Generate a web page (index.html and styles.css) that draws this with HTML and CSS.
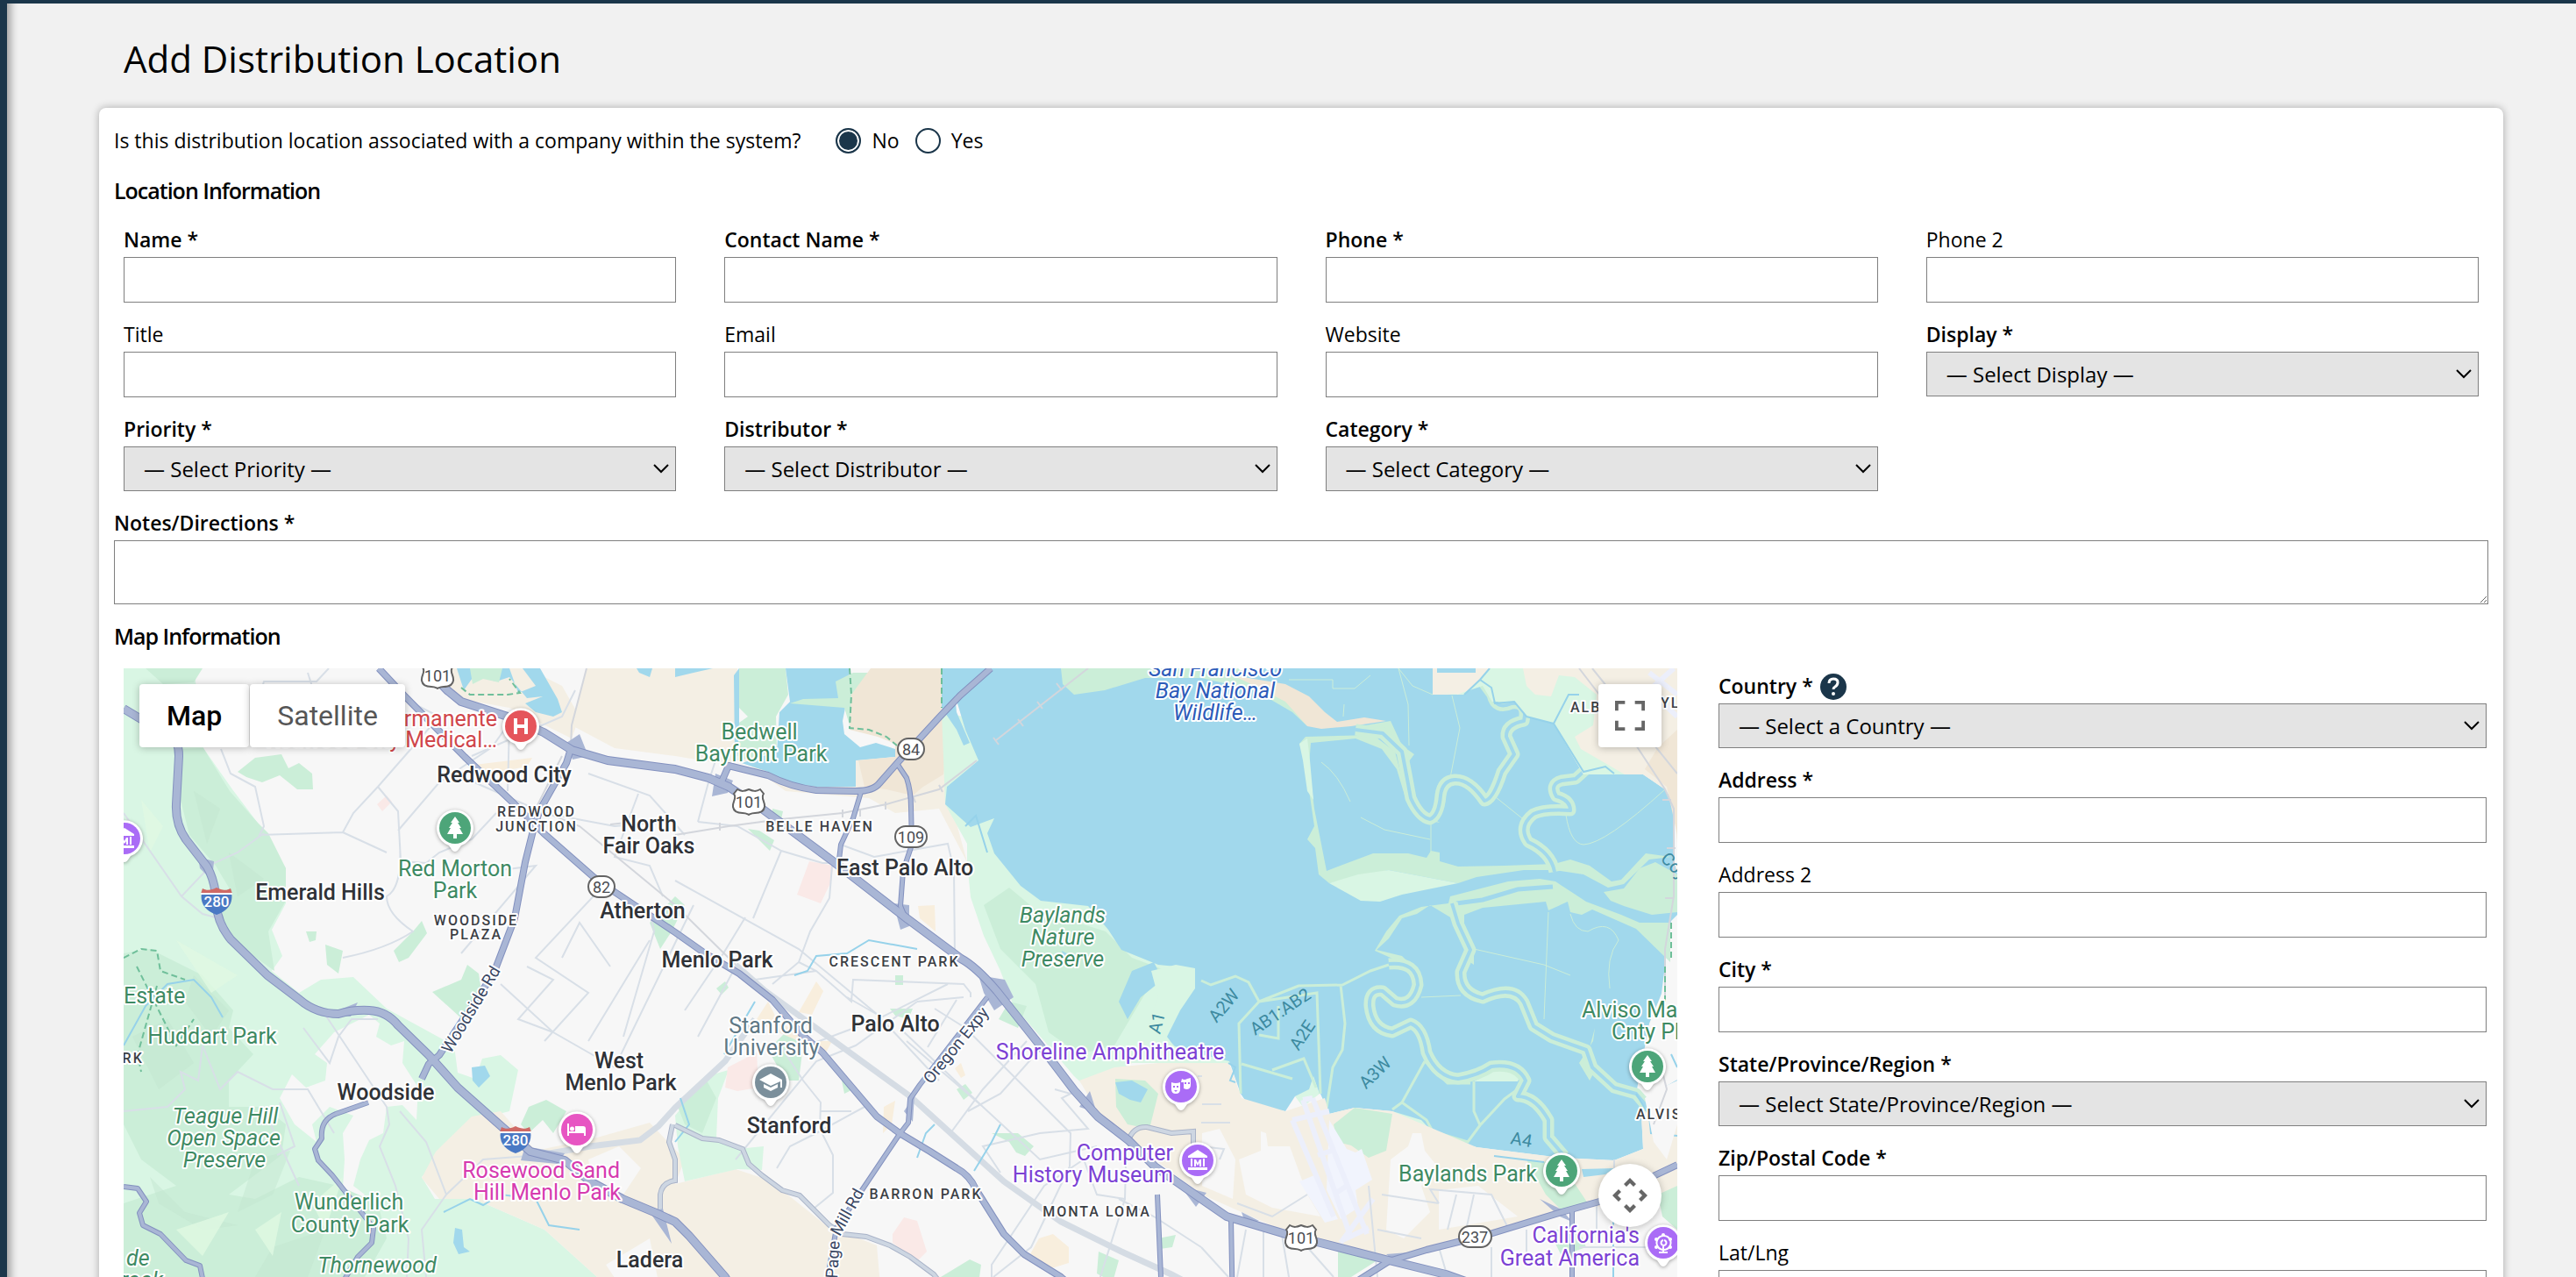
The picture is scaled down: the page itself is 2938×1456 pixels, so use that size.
FILE: index.html
```html
<!DOCTYPE html>
<html lang="en">
<head>
  <meta charset="UTF-8"/>
  <meta name="viewport" content="width=device-width, initial-scale=1.0"/>
  <title>Add Distribution Location</title>
  <link rel="stylesheet" href="styles.css">
</head>
<body>
  <main class="page">
    <h1>Add Distribution Location</h1>

    <form class="card">
      <div class="question" role="radiogroup" aria-labelledby="associated-label">
        <span id="associated-label">Is this distribution location associated with a company within the system?</span>
        <label><input type="radio" name="associated" value="no" checked>No</label>
        <label><input type="radio" name="associated" value="yes">Yes</label>
      </div>

      <h2>Location Information</h2>
      <div class="grid">
        <div class="field required"><label for="name">Name *</label><input type="text" id="name"></div>
        <div class="field required"><label for="contact">Contact Name *</label><input type="text" id="contact"></div>
        <div class="field required"><label for="phone">Phone *</label><input type="text" id="phone"></div>
        <div class="field"><label for="phone2">Phone 2</label><input type="text" id="phone2"></div>
        <div class="field"><label for="title">Title</label><input type="text" id="title"></div>
        <div class="field"><label for="email">Email</label><input type="text" id="email"></div>
        <div class="field"><label for="website">Website</label><input type="text" id="website"></div>
        <div class="field required"><label for="display">Display *</label><select id="display"><option>— Select Display —</option></select></div>
        <div class="field required"><label for="priority">Priority *</label><select id="priority"><option>— Select Priority —</option></select></div>
        <div class="field required"><label for="distributor">Distributor *</label><select id="distributor"><option>— Select Distributor —</option></select></div>
        <div class="field required"><label for="category">Category *</label><select id="category"><option>— Select Category —</option></select></div>
      </div>

      <div class="field required notes"><label for="notes">Notes/Directions *</label><textarea id="notes"></textarea></div>

      <h2>Map Information</h2>
      <div class="map-row">
        <div class="map">
          <svg class="map-canvas" viewBox="0 0 1772 738" preserveAspectRatio="xMinYMin slice">
            <defs>
              <g id="pin">
                <path d="M0 27C-3 27-4 24-7 20A21 21 0 1 1 7 20C4 24 3 27 0 27z"/>
              </g>
              <g id="tree"><path d="M0-13l5 7h-2l4 6h-2l4 7h-7v5h-4v-5h-7l4-7h-2l4-6h-2z"/></g>
              <g id="museum"><path d="M-11-5L0-12l11 7v2h-22zM-8-2h2v9h-2zM6-2h2v9H6zM-11 8h22v3h-22zM-4 7v-8h2l2 4 2-4h2v8H2V3L0 6l-2-3v4z"/></g>
              <g id="interstate">
                <path class="shield-blue" d="M-17-9C-19 2-14 11 0 16C14 11 19 2 17-9z"/>
                <path class="shield-red" d="M-16-14C-11-11-6-12 0-15C6-12 11-11 16-14L18-8H-18z"/>
                <path class="shield-rule" d="M-18-8H18"/>
                <text y="7">280</text>
              </g>
              <g id="us101">
                <path class="sign" d="M-13-14C-8-11-5-12 0-14C5-12 8-11 13-14L17-9C13-4 19 0 18 6C17 12 12 13 7 13C3 13 2 14 0 15C-2 14-3 13-7 13C-12 13-17 12-18 6C-19 0-13-4-17-9z"/>
                <text class="sign-text" y="7">101</text>
              </g>

              <g id="highways">
                <path d="M0 46L20 58L50 70Q63 80 63 100L60 155Q59 178 71 195L95 226Q105 243 106 270Q107 290 122 309L164 350L201 378Q220 394 245 394Q262 389 280 390Q300 391 313 407L348 441L381 478L434 525L464 551L503 561L532 585L569 605L605 620L629 631L645 647L686 694L710 738"/>
                <path d="M345 0L369 25L385 38L438 55L479 73L511 93L552 105L629 115L667 125L690 135L728 160L809 220L893 285L955 331Q972 340 996 368L1046 431L1084 481L1111 511L1146 538L1176 568L1229 605L1258 625L1325 645L1365 655L1443 675L1508 691L1640 738"/>
              </g>
              <g id="expressways">
                <path d="M291 0L320 31L389 101L446 155L479 188L536 238L560 255L629 301L663 325L702 348L740 378L774 418L797 438L859 511L885 530L920 551L950 570Q965 578 972 594L1004 645L1027 668L1069 694L1120 738"/>
                <path d="M989 0L954 31L931 55L885 105L862 131Q855 140 835 140L790 139Q760 135 735 122L690 111L680 134"/>
                <path d="M509 95L505 108L475 161L467 185L458 221L446 285L422 348L360 441L348 451L340 468"/>
                <path d="M1772 566L1683 608L1640 620L1558 645L1486 663L1443 676L1405 700"/>
              </g>
              <g id="arterials">
                <path d="M883 110L893 125Q898 140 898 158L899 201L889 231L886 271L893 288"/>
                <path d="M841 141L832 171L818 201L816 218"/>
                <path d="M985 375L908 475L897 491L895 518L885 531L838 601L813 638L803 694V738"/>
                <path d="M279 495L242 508Q224 515 226 536L218 548L222 561L238 578L275 625L285 638L283 655L267 671L250 700"/>
                <path d="M0 591L16 593L26 608L18 621L22 635L42 645L71 675L87 681L93 710"/>
                <path d="M1263 628L1265 738M1652 618V738M1179 600L1183 694"/>
              </g>
              <g id="connectors">
                <path d="M629 521L660 536L679 538L706 548L713 565L728 578L751 595L771 601L805 635L820 645L847 648L874 658L897 671L924 691L960 738"/>
                <path d="M1146 538Q1152 522 1167 523L1195 530L1220 528V550"/>
                <path d="M612 630L612 600Q614 586 629 584V560L622 540L626 520"/>
              </g>
              <g id="sloughs">
                <path d="M1405 70L1436 74L1458 95L1463 121L1468 148Q1478 170 1490 172Q1500 168 1502 145Q1504 128 1518 127Q1535 126 1552 151Q1562 150 1572 118L1586 98L1577 78Q1576 64 1597 60Q1602 38 1583 40Q1565 48 1561 30L1550 15"/>
                <path d="M1632 232Q1628 210 1602 198Q1590 180 1608 166Q1620 160 1650 162Q1650 150 1634 146Q1626 132 1640 128L1656 126L1667 116"/>
                <path d="M1515 268L1522 291L1536 321L1525 346Q1524 370 1550 376Q1585 360 1597 381L1608 408L1629 421L1668 435L1675 455L1700 478L1725 485L1742 505"/>
                <path d="M1443 337Q1475 334 1476 361Q1470 386 1450 380L1436 368Q1420 366 1421 385Q1424 412 1447 415L1468 405Q1482 410 1486 438Q1498 466 1522 468Q1545 464 1560 454Q1590 450 1599 470L1590 488Q1610 488 1625 515V535L1643 556"/>
              </g>
              <path id="page-mill" d="M814 696L817 648L852 585"/>
            </defs>

            <!-- land -->
            <rect class="land" width="1772" height="738"/>
            <path class="park" d="M0 0H80L88 60L91 91L124 138L152 175L185 228V268L169 298L181 328L169 345L200 370L225 355L262 352L300 388L377 430L381 461L401 468L409 445L430 441L450 458L440 505L400 515L340 580L355 605L400 605L480 640L540 694L550 738H0z"/>
            <path class="land" d="M240 415L280 395L292 405L288 420L305 430L320 425L318 450L336 478L334 515L318 498L300 500L296 530L280 538L270 560L262 590L275 600L268 605L250 592L252 560L250 530L262 510L235 500L215 520L220 540L195 520L178 490L192 463L208 478L230 470L232 450L218 440z"/>
            <path class="park-mid" d="M63 92L91 91L121 140L152 175L165 188L185 228L185 265L165 300L172 345L130 315L110 290L120 250L105 225L75 190L65 150zM25 0H90L80 16L45 18zM0 325L30 320L90 350L125 390L120 410L148 440L120 470L120 500L160 500L185 520L180 555L120 600L60 590L20 560L0 520zM0 610L60 590L150 605L200 580L245 590L290 610L300 650L250 738H0z"/>
            <path class="park-mid" d="M130 118L150 102L180 98L188 114L200 108L215 120L216 138L198 138L178 122L158 130L140 124zM308 322L330 300L340 288L346 302L325 330L314 335zM352 369L385 355L392 338L405 348L408 368L384 398zM208 300L220 300L219 310L212 312zM230 315L250 322L245 348L232 338zM453 520L462 500L482 492L505 505L490 530L478 515L462 530zM600 290L612 278L629 260L640 270L625 300L612 320z"/>
            <path class="shade" d="M10 420L50 400L80 450L40 480zM80 350L120 390L100 420L70 380zM30 580L70 620L130 635L90 640L40 610zM150 560L190 550L170 600L130 620zM170 660L230 640L210 694L150 694zM80 140L110 160L95 200zM120 210L160 240L130 260z"/>
            <path class="shade-light" d="M20 150L45 180L30 210zM60 310L130 350L100 370zM60 640L120 620L90 670zM150 640L180 620L170 670zM215 610L250 580L230 640z"/>

            <path class="sand" d="M340 581L356 551L397 511L430 505L470 550L540 535L600 518L640 560L629 588L698 571L728 581L751 595L801 635L859 658L866 738H560L540 694L480 640L400 605L360 605z"/>
            <path class="land" d="M530 560L565 545L590 570L570 600L535 590zM550 680L600 650L610 700L570 710z"/>
            <path class="park" d="M629 510L665 465L690 458L678 490L676 536L700 548L730 545L728 572L700 571L640 585L632 545z"/>
            <path class="park-mid" d="M632 500L665 470L676 490L660 530L640 520zM735 435L755 415L775 430L770 470L755 470zM819 470L832 480L822 485zM990 530L1020 530L1038 545L1028 556L1018 552L1010 540zM950 480L960 474L968 484L958 492zM874 388L900 388L895 400L880 396zM880 350H889V361H880zM676 365L686 357L690 364L682 372zM1112 665L1135 675L1128 700L1110 690zM1180 650L1200 646L1196 660L1182 662zM932 694L965 674L978 680L970 738H930zM725 185L742 196L737 208L712 183zM740 160L752 163L750 172L740 170z"/>
            <path class="hospital" d="M689 455L722 438L724 478L700 482L686 478zM782 220L810 225L806 245L795 268L768 258zM877 645L890 626L905 630L916 665L905 676L877 655zM289 155L300 145L306 152L295 163z"/>
            <path class="commercial" d="M722 400L735 380L745 400L780 425L808 425L800 440L770 425L735 410zM770 392L790 357L798 368L785 395zM867 500L880 493L876 520L866 530zM906 271L925 270L926 300L908 285zM1044 650L1060 645L1078 660L1078 678L1055 685L1030 675zM948 456L955 450L960 464L955 467zM400 110L466 102L460 112L415 120z"/>

            <path class="sand" d="M345 0H460L500 20L520 55L511 80L440 45L390 36z"/>
            <path class="sand" d="M528 0H700L697 40L705 95L690 110L629 100L560 91L511 65z"/>
            <path class="sand" d="M700 100L850 100L935 110L940 140L962 221L930 160L880 165L850 148L755 140z"/>
            <path class="water" d="M380 0H440L450 28L470 20L455 0H475L495 35L500 50L490 55L470 50L458 40L478 32L460 34L440 10L425 15L400 8L388 25zM585 0H603L600 10L588 5zM629 0H672L650 5L629 10zM696 8L702 0V100H697z"/>
            <path class="park-mid" d="M395 0H432L428 16L410 12L398 18zM702 0L755 0L758 30L744 55L745 95L725 100L700 105L702 62L712 55L702 45z"/>
            <path class="water" d="M755 0H828L826 30L820 60L822 75L840 90L858 85L880 92L881 101L835 105L835 135L790 135L763 131L735 118L705 108L745 95L748 50L760 38z"/>
            <path class="park-mid" d="M812 15L832 5H852L838 35L828 65L822 45L760 40L775 35L815 34z"/>
            <path class="sand-dark" d="M852 0H933L935 55L940 90L935 121L912 135L900 145L870 138L845 135L838 105L880 101L880 86L860 78L828 70L830 30z"/>

            <path class="park" d="M933 50L1180 100L1215 345L1265 450L1199 450L1150 450L1100 480L1084 465L1050 425L1015 385L1000 345L981 305L966 261L962 221L962 200L937 155z"/>
            <path class="park-mid" d="M981 270L1010 250L1040 275L1120 300L1150 330L1190 345L1165 371L1130 430L1090 440L1055 415L1040 360L1000 320zM1010 380L1030 385L1020 410L998 400zM1131 468L1165 470L1180 485L1170 525L1145 520L1132 500z"/>
            <path class="water" d="M933 0L933 45L950 70L958 88L965 85L950 50L948 30L960 70L975 105L939 135L937 155L966 181L993 171L985 188L993 211L1023 248L1046 265L1100 271L1123 298L1138 321L1180 338L1211 341L1205 370L1198 400L1184 418L1199 431L1229 440L1261 448L1274 485L1283 498L1325 505L1336 488L1365 485L1375 508L1404 501L1447 505L1490 531L1543 546L1640 558L1700 561L1733 548L1731 508L1725 485L1740 405L1754 371L1758 338L1765 288L1772 281L1772 235L1767 215V151L1758 138L1733 121L1665 121L1654 101L1631 63L1600 55L1586 38L1561 38V21L1547 13L1529 30H1493V0z"/>
            <path class="water" d="M1135 380L1150 345L1175 335L1185 355L1160 375L1145 400zM1070 322L1085 330L1075 340zM1131 472L1150 470L1168 480L1160 495L1148 492L1135 485zM397 455L412 453L418 465L405 478L398 470zM378 638L386 640L388 660L395 665L382 668L376 655z"/>
            <path class="park" d="M1172 345L1200 338L1222 342L1222 365L1205 390L1190 420L1205 440L1185 435L1170 400L1180 375z"/>

            <path class="park-mid" d="M1069 0H1290L1265 5L1325 28L1350 66L1333 50L1290 25L1229 11L1165 11L1119 25L1084 30L1071 18z"/>
            <path class="sand-dark" d="M1265 8L1325 18L1352 32L1370 50L1384 61L1415 56L1440 60L1400 66L1366 69L1350 66L1325 38L1290 20z"/>
            <path class="park-mid" d="M1341 86L1348 78L1425 76L1450 95L1458 125L1475 160L1501 176L1480 172L1462 148L1452 115L1435 92L1405 80L1354 85L1352 110L1358 160L1372 231L1425 211L1465 211L1486 216L1491 208L1501 210V220L1522 226L1575 225L1632 223L1650 218L1672 225L1697 243L1708 241L1736 211L1765 215L1740 218L1711 246L1693 250L1665 235L1632 230H1597L1543 238L1522 245L1443 230L1375 245L1363 235L1359 205L1350 195L1358 180L1347 105z"/>
            <path class="park-mid" d="M1411 66L1445 60L1458 88L1472 98L1466 106L1448 80z"/>
            <path class="park" d="M1375 245L1411 265L1433 266L1458 258L1522 245L1443 230L1408 235zM1341 86L1350 80L1353 105L1357 150L1350 140L1345 105z"/>
            <path class="park-mid" d="M1688 255L1711 251L1729 228L1747 221L1772 235V278L1743 281L1711 271L1696 265z"/>
            <path class="park-mid" d="M1513 260L1579 243L1615 240L1633 243L1668 266L1708 281L1729 290L1764 290V335L1725 297L1675 275L1663 281L1650 278L1647 266L1625 276L1622 266L1550 273L1529 281V298L1540 315V338L1528 330L1530 310L1515 285L1490 270L1475 280L1458 285L1443 308L1429 321L1458 328L1475 345L1445 330L1427 322L1440 300L1455 282L1480 272L1511 268z"/>
            <path class="channel" d="M1520 268L1550 264L1590 252L1630 249"/>
            <path class="park" d="M1336 488L1352 480L1357 465L1364 485L1345 500zM1447 505L1480 515L1495 531L1460 520zM1540 471L1590 471L1594 462L1565 458z"/>
            <path class="park-mid" d="M1660 450L1676 425L1678 410L1670 440L1680 455L1672 470z"/>

            <g class="levee">
              <path d="M1484 448L1458 495L1486 515L1493 528L1533 540L1547 521L1575 491L1590 480M1540 471V505L1547 521M1295 380L1272 405L1274 485M1275 451L1333 468M1295 380L1361 370L1365 485M1388 361L1393 405L1390 435L1379 455L1372 501M1229 356L1240 361L1268 351L1283 358L1295 380L1340 362L1390 361L1422 345L1443 338M1295 418L1317 422V385M1310 458L1346 445L1360 478M1484 448L1510 473H1536M1458 495L1447 503"/>
              <path class="thin" d="M1329 13H1379V23H1404L1422 8M1454 0L1465 41L1466 88M1454 0L1470 20L1493 30M1515 31L1524 68L1513 125M1392 41L1391 55M1366 107Q1385 120 1399 152M1411 170L1438 184L1490 195M1491 175V212M1565 147L1595 171M1645 167Q1650 200 1665 201Q1690 200 1758 138M1625 278L1620 400M1540 320L1620 338L1650 350M1650 280Q1655 300 1670 300Q1695 285 1705 310Q1690 330 1695 365M1480 375L1525 373"/>
            </g>
            <use href="#sloughs" class="slough-bank"/>
            <use href="#sloughs" class="slough"/>

            <path class="sand" d="M1493 0H1772V200L1767 151L1758 138L1733 121L1665 121L1631 63L1600 55L1586 38L1561 38L1547 13L1529 30H1493z"/>
            <path class="sand-dark" d="M1772 70L1750 90L1735 115L1760 135L1772 190z"/>
            <path class="park" d="M1529 30L1547 13L1558 0H1596L1600 20L1610 30L1628 32L1637 8L1655 10L1680 30L1676 65L1655 78L1662 92L1712 121H1665L1631 63L1600 55L1586 38L1561 38L1550 20L1520 30L1500 28z"/>
            <path class="water" d="M1498 0H1542V5H1498z"/>
            <path class="stream" d="M1558 0L1547 13L1529 30M1547 13L1560 22L1564 40L1586 38L1600 55L1631 63L1648 30H1660M1631 63L1665 118L1690 112L1700 120"/>

            <path class="sand" d="M1090 470L1130 455L1180 450L1261 450L1275 490L1325 505L1370 490L1375 508L1404 501L1447 505L1543 546L1640 558L1700 561L1733 548L1731 508L1772 480V600L1640 620L1500 660L1443 672L1320 640L1230 600L1146 538L1111 505z"/>
            <path class="park-mid" d="M1380 520L1404 501L1447 508L1440 550L1420 558L1400 544L1384 540zM1131 468L1165 470L1180 485L1170 525L1145 520L1132 500zM1600 560L1640 565L1670 610L1640 618L1622 600zM1750 600L1772 590V640L1755 625zM1385 665L1430 675L1400 694L1385 694zM1625 640L1660 640L1668 660L1640 670z"/>
            <path class="water" d="M1131 472L1150 470L1168 480L1160 495L1148 492L1135 485zM1663 571L1700 570L1690 577L1665 580z"/>
            <path class="stream" d="M1563 556L1620 563M1260 450L1268 455L1262 470L1268 472M1699 575V738M1725 485L1740 510L1742 530L1772 533M1755 480L1772 470M1765 440L1772 455"/>
            <path class="land" d="M1230 530L1250 525L1268 560L1265 605L1230 590zM1272 560L1297 550V528L1303 530L1305 545L1330 545L1350 600L1365 625L1310 615L1280 600zM1445 560L1465 545L1470 530L1480 530L1484 550L1500 570L1480 590L1490 620L1460 650L1440 640zM1500 595L1545 590L1590 625L1500 640zM1735 490L1755 478L1772 470V520L1760 560L1745 540zM1280 640L1350 660L1360 694H1280z"/>
            <path class="airport" d="M1375 515L1395 548L1405 552L1412 548L1424 583L1405 595L1408 615L1388 628L1372 595zM1341 585L1358 578L1385 628L1370 632z"/>
            <path class="runway" d="M1345 492L1400 650M1356 490L1418 645M1345 492L1356 490M1333 515L1375 505M1333 515L1380 625M1390 652L1420 638M1362 555L1378 550M1380 600L1395 590M1388 655L1425 605"/>
            <path class="parking" d="M1768 0L1740 25L1772 55M1740 5L1772 30"/>

            <!-- streets -->
            <g class="street">
              <path d="M111 92L122 120L150 135L160 180L155 190L250 187L262 165L290 135L360 55L330 40M234 0L220 15L160 15L150 50M210 5L218 30L240 35M290 135L313 163L316 220L345 222L360 210L397 195L425 165M160 188L130 210L101 223L66 260M0 165L66 260L90 280L105 284M250 187L300 210M313 185L360 130L420 90L440 62L438 140M315 200Q318 250 300 260Q300 280 330 300Q300 320 250 330"/>
              <path d="M397 100L500 55L515 25M530 120L600 145L640 190M400 130L480 165L560 180L629 174M587 143L560 215L600 225L615 260M385 325L470 225L430 230M600 278L605 300L570 420M430 360L490 415L560 455M460 340L490 355L450 400L490 415M545 250L470 330L530 370L480 425M560 455L650 270M530 425L600 310"/>
              <path d="M629 242L770 320L860 395L930 470M709 284L684 325L640 390M750 208L718 285M655 175L700 180L750 208L797 222L818 222M818 201L856 215L940 200L947 230L948 330M808 225L805 262L783 300L770 335L740 360M655 175L667 130L680 90M770 335L790 345L830 380L832 355L958 360L966 370V375M790 345L720 355M825 375L860 395M698 340L655 420M698 560L790 448L835 430L905 380M905 380L958 375"/>
              <path d="M780 430L860 400L940 360M917 432L950 378M925 388L960 410L1080 530L1079 568M893 425L980 500L1045 560L1110 545M943 530L980 480L1030 425M1000 575L980 545L1045 530L1100 525L1070 490L1080 485L1062 480M963 505L1000 485L1040 440M1079 568L1035 660L992 694M990 738V680L1050 590L1095 560L1110 600L1142 605L1143 565M1142 605L1100 738M1135 605L1175 625L1229 660M749 430L775 470L795 495L794 525L809 555V598L787 616M745 570L760 545L790 530L845 500M795 505L830 505M885 410L980 500"/>
              <path d="M230 395L300 500L303 520L292 545L310 590L325 650L323 694M205 410L235 450L245 420L260 400L290 400M160 500L170 525L200 590M175 555L195 545L190 530L178 495M315 505L345 540L368 600L340 640L345 694M0 505L50 500L70 480L65 460L85 470L90 430M90 430L110 480L130 460L170 480L210 480L240 530M368 600L410 560L475 555M555 340L520 290L500 330M1270 610L1310 625L1350 600M1229 660L1260 694M1420 590L1430 694M1435 600L1500 610M1430 640L1480 650M1280 640L1270 694M1300 640V700M1320 640L1330 700M1350 660L1380 694M1500 610L1490 594L1560 600L1580 640M1520 600L1510 640M1540 600L1530 645M1560 660V738M1500 660L1510 694M1600 640V680M1680 610V640M1700 560L1700 610M1660 660H1772M1230 497H1252M1229 518H1262M1229 545L1255 548L1250 560M1230 465H1225"/>
            </g>
            <g class="road-wide">
              <path d="M698 338L732 368L897 488L1004 585L1069 631L1138 665L1195 691L1260 725"/>
              <path d="M475 555L532 545L589 538L610 522L629 501L686 448L720 400"/>
            </g>
            <path class="rail" d="M629 190L690 180L750 172L820 165L870 155L930 138L973 105M500 100L470 160L520 180L629 270L698 338M995 82L1100 0M1675 0L1772 120M1660 0L1710 65L1758 138L1768 160V260L1758 320L1758 380M528 0L511 65L510 90M555 178L600 173M1745 520L1760 480L1750 440"/>
            <path class="rail-ties" d="M840 160v9M869 152v9M900 145l3 8M930 133l4 8M820 161v9M680 176v9M1020 58l6 8M1042 38l6 8M1064 17l6 8M992 79l6 8M1755 150h10M1760 205h10M1758 262h10"/>
            <path class="trail" d="M828 0L830 30L828 68L850 70L870 78L882 88M933 0V45M385 22L395 30H438L452 28L440 12M0 330L20 320L38 322L42 345L70 355M15 340L60 430L80 400M1765 290V330M1758 340V380M38 362L16 440L20 460"/>
            <path class="stream" d="M0 430L25 385L50 360L80 355L100 375L113 398M960 180L972 168L985 210M905 320L850 310L825 325L790 328L780 345L765 350M629 540L645 520L635 490M365 620L395 605L410 612L430 600L470 605L485 635L520 640M905 558L915 530L925 520M970 573L990 540L1000 520M685 440L720 380"/>

            <use href="#connectors" class="casing-light"/>
            <use href="#connectors" class="fill-light"/>
            <path class="junction" d="M85 215l18 5l-2 22l-14-14zM232 395l35-14l-8 16zM458 545l45 8l-8 12l-42-4zM600 620l15-4l10 40zM675 120l20 8l-6 14l-18 4zM505 85l15-10l10 25l-18 4zM878 268l18 2v24l-10 4zM975 350l30 5l10 20l-22 15l-12-20zM1090 500l12-18l8 25zM1205 590l30 8l-12 16zM1275 620l20 10l-15 5zM1440 668l25-2l-10 14zM1615 605l25 12l12 14l-14-6zM890 505l12-18l-2 30z"/>
            <use href="#arterials" class="casing arterial"/>
            <use href="#expressways" class="casing expressway"/>
            <use href="#highways" class="casing highway"/>
            <use href="#arterials" class="fill arterial"/>
            <use href="#expressways" class="fill expressway"/>
            <use href="#highways" class="fill highway"/>

            <!-- route signs -->
            <g class="signs">
              <use href="#interstate" transform="translate(106 265)"/>
              <use href="#interstate" transform="translate(447 537)"/>
              <use href="#us101" transform="translate(358 8)"/>
              <use href="#us101" transform="translate(713 152)"/>
              <use href="#us101" transform="translate(1343 649)"/>
              <rect class="sign" x="530" y="237" width="30" height="24" rx="12"/><text class="sign-text" x="545" y="256">82</text>
              <rect class="sign" x="883" y="80" width="30" height="24" rx="12"/><text class="sign-text" x="898" y="99">84</text>
              <rect class="sign" x="880" y="180" width="36" height="24" rx="12"/><text class="sign-text" x="898" y="199">109</text>
              <rect class="sign" x="1523" y="636" width="37" height="24" rx="12"/><text class="sign-text" x="1541" y="655">237</text>
            </g>

            <!-- street and pond names -->
            <g class="street-name">
              <text transform="translate(373 440) rotate(-59)">Woodside Rd</text>
              <text transform="translate(921 475) rotate(-51)">Oregon Expy</text>
              <text><textPath href="#page-mill">Page Mill Rd</textPath></text>
            </g>
            <g class="pond">
              <text transform="translate(1185 406) rotate(-76)">A1</text>
              <text transform="translate(1260 389) rotate(-50)">A2W</text>
              <text transform="translate(1323 397) rotate(-34)">AB1:AB2</text>
              <text transform="translate(1350 422) rotate(-56)">A2E</text>
              <text transform="translate(1432 466) rotate(-44)">A3W</text>
              <text transform="translate(1593 544) rotate(10)">A4</text>
              <text transform="translate(1764 230) rotate(45)">Coy</text>
            </g>

            <!-- places -->
            <g class="town">
              <text x="434" y="130">Redwood City</text>
              <text x="224" y="264">Emerald Hills</text>
              <text x="599" y="186">North</text><text x="599" y="211">Fair Oaks</text>
              <text x="592" y="285">Atherton</text>
              <text x="677" y="341">Menlo Park</text>
              <text x="891" y="236">East Palo Alto</text>
              <text x="299" y="492">Woodside</text>
              <text x="565" y="456">West</text><text x="567" y="481">Menlo Park</text>
              <text x="600" y="683">Ladera</text>
              <text x="759" y="530">Stanford</text>
              <text x="880" y="414">Palo Alto</text>
            </g>
            <g class="district">
              <text x="471" y="169">REDWOOD</text><text x="471" y="186">JUNCTION</text>
              <text x="402" y="293">WOODSIDE</text><text x="402" y="309">PLAZA</text>
              <text x="794" y="186">BELLE HAVEN</text>
              <text x="879" y="340">CRESCENT PARK</text>
              <text x="915" y="605">BARRON PARK</text>
              <text x="1110" y="625">MONTA LOMA</text>
              <text class="start" x="1650" y="50">ALB</text>
              <text class="start" x="1753" y="45">YL</text>
              <text class="start" x="1725" y="514">ALVISO</text>
              <text class="start" x="-14" y="450">ARK</text>
            </g>
            <g class="poi green">
              <text x="378" y="237">Red Morton</text><text x="378" y="262">Park</text>
              <text x="725" y="81">Bedwell</text><text x="727" y="106">Bayfront Park</text>
              <text class="start" x="0" y="382">Estate</text>
              <text x="101" y="428">Huddart Park</text>
              <text x="257" y="617">Wunderlich</text><text x="258" y="643">County Park</text>
              <text class="end" x="1612" y="585">Baylands Park</text>
              <text class="start" x="1663" y="398">Alviso Marina</text><text class="start" x="1697" y="423">Cnty Pk</text>
              <g class="nature">
                <text x="116" y="519">Teague Hill</text><text x="114" y="544">Open Space</text><text x="115" y="569">Preserve</text>
                <text x="1071" y="290">Baylands</text><text x="1071" y="315">Nature</text><text x="1071" y="340">Preserve</text>
                <text x="289" y="689">Thornewood</text>
                <text class="start" x="3" y="681">de</text><text class="start" x="-18" y="706">Brook</text>
              </g>
            </g>
            <g class="poi blue nature">
              <text x="1245" y="9">San Francisco</text><text x="1245" y="34">Bay National</text><text x="1245" y="59">Wildlife…</text>
            </g>
            <g class="poi red">
              <text class="end" x="426" y="66">Kaiser Permanente</text><text class="end" x="426" y="90">Redwood City Medical…</text>
            </g>
            <g class="poi pink">
              <text class="end" x="566" y="581">Rosewood Sand</text><text class="end" x="567" y="606">Hill Menlo Park</text>
            </g>
            <g class="poi slate">
              <text x="738" y="416">Stanford</text><text x="739" y="441">University</text>
            </g>
            <g class="poi purple">
              <text x="1125" y="446">Shoreline Amphitheatre</text>
              <text class="end" x="1197" y="561">Computer</text><text class="end" x="1197" y="586">History Museum</text>
              <text class="end" x="1729" y="655">California's</text><text class="end" x="1729" y="681">Great America</text>
            </g>

            <!-- pins -->
            <g class="pin red" transform="translate(453 66)"><use href="#pin"/><circle r="18"/><path d="M-8-9h4v7h8v-7h4V9H4V2h-8v7h-4z"/></g>
            <g class="pin green" transform="translate(378 182)"><use href="#pin"/><circle r="18"/><use href="#tree"/></g>
            <g class="pin green" transform="translate(1738 454)"><use href="#pin"/><circle r="18"/><use href="#tree"/></g>
            <g class="pin green" transform="translate(1640 573)"><use href="#pin"/><circle r="18"/><use href="#tree"/></g>
            <g class="pin purple" transform="translate(1 194)"><use href="#pin"/><circle r="18"/><use href="#museum"/></g>
            <g class="pin purple" transform="translate(1225 561)"><use href="#pin"/><circle r="18"/><use href="#museum"/></g>
            <g class="pin purple" transform="translate(1206 477)"><use href="#pin"/><circle r="18"/>
              <path d="M1-9Q4-7 7-9L11-10V-2Q11 3 6 3L3 2V-5H0zM-11-5Q-6-3-1-5V3Q-1 8-6 8Q-11 8-11 3z"/>
              <path class="hole" d="M-9-1h2v2h-2zM-5-1h2v2h-2zM4-5h2v2H4zM8-5h2v2H8zM-8 4h4l-2 2z"/></g>
            <g class="pin purple" transform="translate(1756 655)"><use href="#pin"/><circle r="18"/>
              <path class="wheel" d="M0-8A8 8 0 1 0 1-8M0-3a3 3 0 1 0 1 0M0 2V10M-5 11H5"/>
              <g><circle class="dot" cy="-9" r="2"/><circle class="dot" cx="8" cy="-4" r="2"/><circle class="dot" cx="8" cy="5" r="2"/><circle class="dot" cx="-8" cy="5" r="2"/><circle class="dot" cx="-8" cy="-4" r="2"/></g></g>
            <g class="pin pink" transform="translate(517 526)"><use href="#pin"/><circle r="18"/><path d="M-11-7h2v9h7v-6h9q3 0 3 3v8H8V4H-9v3h-2zM-8-1a2 2 0 1 0 5 0a2 2 0 1 0-5 0z"/></g>
            <g class="pin slate" transform="translate(738 472)"><use href="#pin"/><circle r="18"/><path d="M0-10l13 7v9h-2V-1L0 4l-13-7zM-8 2l8 4l8-4v4l-8 4l-8-4z"/></g>
          </svg>

          <div class="map-type">
            <button type="button" class="active">Map</button>
            <button type="button">Satellite</button>
          </div>
          <button type="button" class="map-button fullscreen" aria-label="Toggle fullscreen view">
            <svg viewBox="0 0 18 18" width="34" height="34"><path d="M0 0v6h2V2h4V0zM18 0h-6v2h4v4h2zM16 12v4h-4v2h6v-6zM2 12H0v6h6v-2H2z"/></svg>
          </button>
          <button type="button" class="map-button camera" aria-label="Map camera controls">
            <svg viewBox="-21 -21 42 42" width="42" height="42"><path d="M-7-13L0-20L7-13L4-10L0-14L-4-10zM-7 13L0 20L7 13L4 10L0 14L-4 10zM-13-7L-20 0L-13 7L-10 4L-14 0L-10-4zM13-7L20 0L13 7L10 4L14 0L10-4z"/></svg>
          </button>
        </div>

        <div class="address">
          <div class="field required">
            <label for="country">Country * <svg class="help" viewBox="0 0 30 30" width="30" height="30"><circle cx="15" cy="15" r="15"/><path d="M10 11Q10 6 15 6Q20 6 20 10Q20 13 17 15Q15 16 15 18"/><circle class="help-dot" cx="15" cy="23" r="2"/></svg></label>
            <select id="country"><option>— Select a Country —</option></select>
          </div>
          <div class="field required"><label for="address">Address *</label><input type="text" id="address"></div>
          <div class="field"><label for="address2">Address 2</label><input type="text" id="address2"></div>
          <div class="field required"><label for="city">City *</label><input type="text" id="city"></div>
          <div class="field required"><label for="state">State/Province/Region *</label><select id="state"><option>— Select State/Province/Region —</option></select></div>
          <div class="field required"><label for="zip">Zip/Postal Code *</label><input type="text" id="zip"></div>
          <div class="field"><label for="latlng">Lat/Lng</label><input type="text" id="latlng"></div>
        </div>
      </div>
    </form>
  </main>
</body>
</html>
```
FILE: styles.css
```css
* { box-sizing:border-box; }
html { scrollbar-width:none; }
body { margin:0; background:#f1f1f1; color:#000; font-family:"Open Sans", sans-serif; font-size:24px; line-height:33px; border-top:4px solid #1b364a; border-left:8px solid #1b364a; }
.page { padding:34px 83px 40px 105px; box-shadow:inset 12px 0 10px -8px rgba(0,0,0,0.35); }
h1 { margin:0 0 28px 28px; font-size:42px; font-weight:400; line-height:57px; }
h2 { margin:23px 0 22px; font-size:25px; font-weight:600; line-height:35px; letter-spacing:-1px; }

.card { background:white; border-radius:8px; padding:21px 17px 40px; box-shadow:0 0 10px rgba(0,0,0,0.3); }
.question { display:flex; align-items:center; gap:18px; font-size:23px; }
.question > span { margin-right:22px; }
.question label { display:flex; align-items:center; gap:12px; }
.question input { appearance:none; width:29px; height:29px; margin:0; border:2px solid #1b364a; border-radius:50%; background:white; }
.question input:checked { background:#1b364a; box-shadow:inset 0 0 0 2px white; }

.grid { display:grid; grid-template-columns:repeat(4, 1fr); gap:20px 55px; padding:0 11px; }
.field { display:flex; flex-direction:column; gap:3px; }
.required label { font-weight:600; }
.field label { display:flex; align-items:center; gap:8px; height:33px; font-size:23px; }
.field input, .field select, .field textarea { width:100%; height:52px; margin:0; padding:0 12px; border:1px solid #7f7f7f; border-radius:0; background:white; color:#000; font:inherit; font-weight:400; }
.field select { appearance:none; height:51px; padding:0 40px 0 22px; background:#e4e4e4 url("data:image/svg+xml,%3Csvg xmlns='http://www.w3.org/2000/svg' width='18' height='11'%3E%3Cpath d='M1 1l8 8 8-8' fill='none' stroke='%23000' stroke-width='2'/%3E%3C/svg%3E") no-repeat right 7px center; }
.field textarea { height:73px; display:block; resize:vertical; }
.notes { margin-top:20px; }
.notes + h2 { margin:19px 0; }
.help { fill:#1b364a; }
.help path { fill:none; stroke:white; stroke-width:3; }
.help .help-dot { fill:white; }

.map-row { display:grid; grid-template-columns:1772fr 876fr; gap:47px; padding:0 2px 0 11px; }
.address { display:flex; flex-direction:column; gap:20px; padding-top:4px; }
.map { position:relative; overflow:hidden; font-family:Roboto, sans-serif; min-height:738px; }
.map-canvas { position:absolute; inset:0; width:100%; height:100%; }
.map button { border:0; background:white; box-shadow:0 1px 8px rgba(0,0,0,0.25); font-family:inherit; }
.map-type { position:absolute; top:18px; left:18px; display:flex; gap:1px; }
.map-type button { height:72px; padding:0 31px; border-radius:4px; font-size:32px; color:#565656; }
.map-type .active { color:#000; font-weight:500; }
.map-button { position:absolute; right:18px; width:72px; height:72px; padding:0; display:flex; align-items:center; justify-content:center; border-radius:4px; }
.map-button svg { fill:#666; }
.fullscreen { top:18px; }
.map .camera { top:565px; border-radius:50%; }

/* terrain */
.land { fill:#f7f7f7; }
.park { fill:#d9f6e4; }
.park-mid { fill:#cbeed8; }
.shade { fill:#c3e6d0; opacity:0.5; }
.shade-light { fill:#e0f9e2; opacity:0.8; }
.sand { fill:#f4efe4; }
.sand-dark { fill:#f0e6d6; }
.commercial { fill:#f8eedd; }
.hospital { fill:#fae9e7; }
.airport { fill:#f1f4fd; }
.water { fill:#a1d8ec; }
.runway, .parking { fill:none; stroke:#eceffb; stroke-width:6; stroke-linejoin:round; }
.levee path { fill:none; stroke:#cbeed8; stroke-width:3; }
.levee .thin { stroke-width:1; }
.slough-bank { fill:none; stroke:#cbeed8; stroke-width:13; stroke-linejoin:round; }
.slough { fill:none; stroke:#a1d8ec; stroke-width:4; stroke-linejoin:round; }
.channel { fill:none; stroke:#a1d8ec; stroke-width:5; }
.stream { fill:none; stroke:#96d2ea; stroke-width:2; }

/* roads */
.street { fill:none; stroke:#d8dfe7; stroke-width:2; }
.road-wide { fill:none; stroke:#d5dce4; stroke-width:7; }
.rail { fill:none; stroke:#d3d6dc; stroke-width:2; }
.rail-ties { fill:none; stroke:#d3d6dc; stroke-width:2; }
.trail { fill:none; stroke:#6fbf9a; stroke-width:2; stroke-dasharray:7 4; }
.casing { fill:none; stroke:#8391bf; stroke-linejoin:round; }
.fill { fill:none; stroke:#a9b6d5; stroke-linejoin:round; }
.casing.highway { stroke-width:10; }
.fill.highway { stroke-width:8; }
.casing.expressway { stroke-width:8; }
.fill.expressway { stroke-width:6; }
.casing.arterial { stroke-width:6; }
.fill.arterial { stroke-width:4; }
.casing-light { fill:none; stroke:#a9b3c8; stroke-width:6; }
.fill-light { fill:none; stroke:#cdd6e2; stroke-width:4; }
.junction { fill:#a9b6d5; }

/* labels */
.map-canvas text { text-anchor:middle; paint-order:stroke; stroke:white; stroke-width:4px; stroke-linejoin:round; }
.map-canvas .start { text-anchor:start; }
.map-canvas .end { text-anchor:end; }
.town { font-size:25px; font-weight:500; fill:#2f3237; }
.district { font-size:16px; font-weight:500; letter-spacing:2px; fill:#3c4045; }
.poi { font-size:25px; }
.nature { font-style:italic; }
.poi.green { fill:#3e8a63; }
.poi.blue { fill:#2d5bb9; }
.poi.red { fill:#d0464b; }
.poi.pink { fill:#d63bb0; }
.poi.slate { fill:#5f7885; }
.poi.purple { fill:#7c42d4; }
.map-canvas .street-name text { text-anchor:start; font-size:19px; fill:#3a4763; }
.map-canvas .pond text { font-size:20px; fill:#3d8aa0; stroke:none; }
.map-canvas #interstate text { fill:white; stroke:none; font-size:17px; font-weight:500; }
.map-canvas .sign-text { fill:#4a4d52; stroke:none; font-size:18px; }
.sign { fill:white; stroke:#636363; stroke-width:2; }
.shield-blue { fill:#4a79c4; }
.shield-red { fill:#cf6a66; }
.shield-rule { stroke:white; stroke-width:2; }

/* pins */
.pin { fill:white; filter:drop-shadow(0 1px 2px rgba(0,0,0,0.35)); }
.pin.red circle { fill:#e5555b; }
.pin.green circle { fill:#4da579; }
.pin.purple circle, .pin .hole { fill:#aa6cf6; }
.pin.pink circle { fill:#e755c2; }
.pin.slate circle { fill:#7b8f9b; }
.pin .wheel { fill:none; stroke:white; stroke-width:2; }
.pin.purple .dot { fill:white; }
```
